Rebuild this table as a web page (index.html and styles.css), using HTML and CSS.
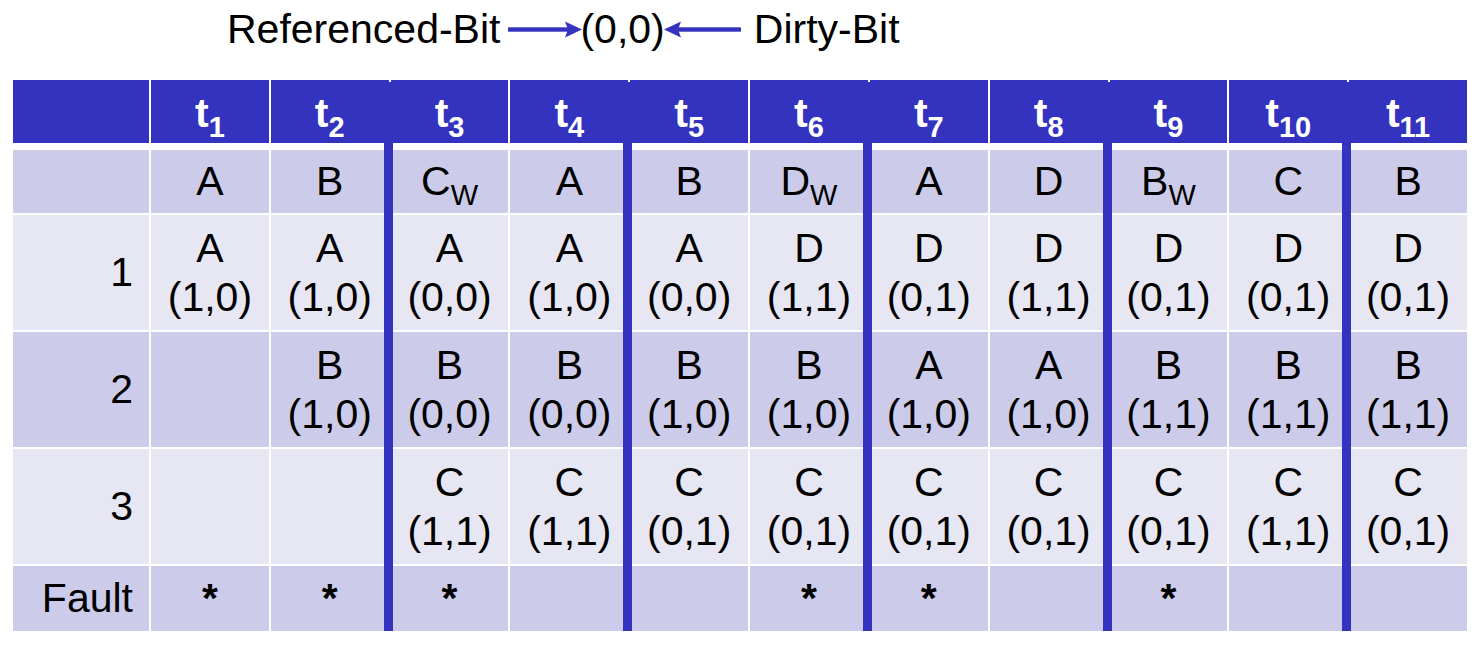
FILE: index.html
```html
<!DOCTYPE html>
<html>
<head>
<meta charset="utf-8">
<title>Referenced-Bit / Dirty-Bit</title>
<link rel="stylesheet" href="styles.css">
</head>
<body>
<div class="legend">
  <span>Referenced-Bit</span>
  <svg class="arrow-r" width="74" height="47" viewBox="0 0 74 47"><rect x="0" y="21.3" width="62" height="4.4" fill="#3333c0"/><polygon points="57,15.5 74,23.5 57,31.5 60,23.5" fill="#3333c0"/></svg>
  <span class="pair">(0,0)</span>
  <svg class="arrow-l" width="77" height="47" viewBox="0 0 77 47"><rect x="14" y="21.3" width="63" height="4.4" fill="#3333c0"/><polygon points="0,23.5 17,15.5 14,23.5 17,31.5" fill="#3333c0"/></svg>
  <span class="dirty">Dirty-Bit</span>
</div>

<div class="grid">
  <div class="c h"></div>
  <div class="c h"><span>t<sub>1</sub></span></div>
  <div class="c h"><span>t<sub>2</sub></span></div>
  <div class="c h sep"><span>t<sub>3</sub></span></div>
  <div class="c h"><span>t<sub>4</sub></span></div>
  <div class="c h sep"><span>t<sub>5</sub></span></div>
  <div class="c h"><span>t<sub>6</sub></span></div>
  <div class="c h sep"><span>t<sub>7</sub></span></div>
  <div class="c h"><span>t<sub>8</sub></span></div>
  <div class="c h sep"><span>t<sub>9</sub></span></div>
  <div class="c h"><span>t<sub>10</sub></span></div>
  <div class="c h sep"><span>t<sub>11</sub></span></div>

  <div class="c dark"></div>
  <div class="c dark"><span>A</span></div>
  <div class="c dark"><span>B</span></div>
  <div class="c dark"><span>C<sub>W</sub></span></div>
  <div class="c dark"><span>A</span></div>
  <div class="c dark"><span>B</span></div>
  <div class="c dark"><span>D<sub>W</sub></span></div>
  <div class="c dark"><span>A</span></div>
  <div class="c dark"><span>D</span></div>
  <div class="c dark"><span>B<sub>W</sub></span></div>
  <div class="c dark"><span>C</span></div>
  <div class="c dark"><span>B</span></div>

  <div class="c light lbl">1</div>
  <div class="c light"><span>A<br>(1,0)</span></div>
  <div class="c light"><span>A<br>(1,0)</span></div>
  <div class="c light"><span>A<br>(0,0)</span></div>
  <div class="c light"><span>A<br>(1,0)</span></div>
  <div class="c light"><span>A<br>(0,0)</span></div>
  <div class="c light"><span>D<br>(1,1)</span></div>
  <div class="c light"><span>D<br>(0,1)</span></div>
  <div class="c light"><span>D<br>(1,1)</span></div>
  <div class="c light"><span>D<br>(0,1)</span></div>
  <div class="c light"><span>D<br>(0,1)</span></div>
  <div class="c light"><span>D<br>(0,1)</span></div>

  <div class="c dark lbl">2</div>
  <div class="c dark"></div>
  <div class="c dark"><span>B<br>(1,0)</span></div>
  <div class="c dark"><span>B<br>(0,0)</span></div>
  <div class="c dark"><span>B<br>(0,0)</span></div>
  <div class="c dark"><span>B<br>(1,0)</span></div>
  <div class="c dark"><span>B<br>(1,0)</span></div>
  <div class="c dark"><span>A<br>(1,0)</span></div>
  <div class="c dark"><span>A<br>(1,0)</span></div>
  <div class="c dark"><span>B<br>(1,1)</span></div>
  <div class="c dark"><span>B<br>(1,1)</span></div>
  <div class="c dark"><span>B<br>(1,1)</span></div>

  <div class="c light lbl">3</div>
  <div class="c light"></div>
  <div class="c light"></div>
  <div class="c light"><span>C<br>(1,1)</span></div>
  <div class="c light"><span>C<br>(1,1)</span></div>
  <div class="c light"><span>C<br>(0,1)</span></div>
  <div class="c light"><span>C<br>(0,1)</span></div>
  <div class="c light"><span>C<br>(0,1)</span></div>
  <div class="c light"><span>C<br>(0,1)</span></div>
  <div class="c light"><span>C<br>(0,1)</span></div>
  <div class="c light"><span>C<br>(1,1)</span></div>
  <div class="c light"><span>C<br>(0,1)</span></div>

  <div class="c dark lbl">Fault</div>
  <div class="c dark star">*</div>
  <div class="c dark star">*</div>
  <div class="c dark star">*</div>
  <div class="c dark star"></div>
  <div class="c dark star"></div>
  <div class="c dark star">*</div>
  <div class="c dark star">*</div>
  <div class="c dark star"></div>
  <div class="c dark star">*</div>
  <div class="c dark star"></div>
  <div class="c dark star"></div>
</div>
</body>
</html>
```
FILE: styles.css
```css
body {
  margin: 0;
  background: #ffffff;
  color: #000000;
  font-family: "Liberation Sans", Arial, sans-serif;
}

.legend {
  display: flex;
  align-items: flex-start;
  height: 74px;
  padding: 6px 0 0 227px;
  font-size: 41px;
  line-height: 47px;
  white-space: nowrap;
}

.legend svg {
  display: block;
  flex: none;
}

.arrow-r {
  margin-left: 8px;
}

.pair {
  margin-left: -2px;
}

.arrow-l {
  margin-left: -1px;
}

.dirty {
  margin-left: 13px;
}

.grid {
  margin-left: 13px;
  width: 1454px;
  display: grid;
  grid-template-columns: 136px repeat(11, 1fr);
  grid-template-rows: 68px 63px 115px 115px 115px 65px;
  gap: 2px;
  font-size: 41px;
}

.c {
  display: flex;
  align-items: center;
  justify-content: center;
  text-align: center;
  line-height: 49px;
  white-space: nowrap;
}

.h {
  position: relative;
  margin-bottom: 5px;
  padding-top: 4px;
  background: #3333c0;
  color: #ffffff;
  font-weight: bold;
}

.dark {
  background: #ccccea;
}

.light {
  background: #e7e7f4;
}

.lbl {
  justify-content: flex-end;
  padding-right: 16px;
}

.star {
  font-weight: bold;
}

sub {
  font-size: 29px;
  vertical-align: -10px;
  line-height: 0;
}

.sep::before {
  content: "";
  position: absolute;
  left: -7px;
  top: 2px;
  width: 9px;
  height: 551px;
  background: #3333c0;
  z-index: 1;
}
```
